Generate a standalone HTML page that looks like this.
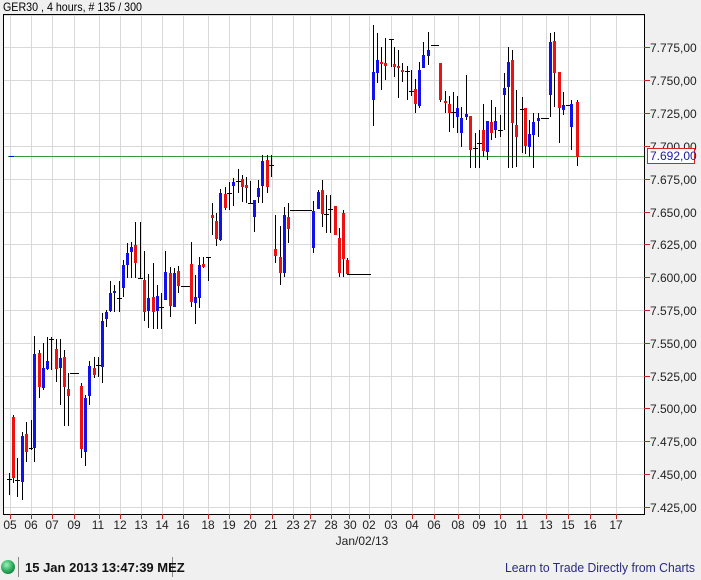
<!DOCTYPE html>
<html><head><meta charset="utf-8"><style>
body{margin:0;width:701px;height:580px;background:#f0f0f0;overflow:hidden;font-family:"Liberation Sans",Arial,sans-serif}
svg{display:block}
text{font-family:"Liberation Sans",Arial,sans-serif}
</style></head><body>
<svg width="701" height="580" viewBox="0 0 701 580" xmlns="http://www.w3.org/2000/svg">
<rect width="701" height="580" fill="#f0f0f0"/>
<text x="3" y="11" font-size="12" fill="#000" textLength="139" lengthAdjust="spacingAndGlyphs">GER30 , 4 hours, # 135 / 300</text>
<rect x="3.5" y="14.5" width="641" height="500" fill="#fff" stroke="#000"/>
<g stroke="#d9d9d9" stroke-width="1">
<path d="M4 15.5H644M4 47.5H644M4 80.5H644M4 113.5H644M4 146.5H644M4 179.5H644M4 212.5H644M4 244.5H644M4 277.5H644M4 310.5H644M4 343.5H644M4 376.5H644M4 408.5H644M4 441.5H644M4 474.5H644M4 507.5H644"/>
<path d="M10.5 15V514M31.5 15V514M52.5 15V514M74.5 15V514M99.5 15V514M120.5 15V514M141.5 15V514M162.5 15V514M183.5 15V514M208.5 15V514M229.5 15V514M250.5 15V514M272.5 15V514M293.5 15V514M310.5 15V514M331.5 15V514M349.5 15V514M369.5 15V514M391.5 15V514M412.5 15V514M434.5 15V514M458.5 15V514M479.5 15V514M500.5 15V514M522.5 15V514M546.5 15V514M568.5 15V514M590.5 15V514M616.5 15V514"/>
</g>
<path d="M8 156.5H644" stroke="#3a9a3a"/>
<path d="M9 156.5H14" stroke="#0000ff"/>
<path stroke="#000" stroke-width="1" fill="none" d="
M9.5 473V495M13.5 415V483M17.5 458V497M22.5 432V500M26.5 422V462M31.5 420V450M34.5 336V462M39.5 350V398M43.5 343V390M47.5 337V370M51.5 337V370M56.5 339V382M60.5 339V405M64.5 350V426M68.5 373V426M81.5 383V458M85.5 395V466M89.5 361V405M94.5 357V378M98.5 357V377M102.5 313V383M106.5 310V327M110.5 281V312M114.5 285V312M119.5 281V312M123.5 260V297M127.5 243V278M131.5 242V278M135.5 222V278M140.5 222V278M144.5 251V321M148.5 274V328M153.5 263V329M157.5 285V329M161.5 293V329M165.5 251V300M170.5 267V317M174.5 268V307M178.5 266V293M191.5 242V307M195.5 275V324M199.5 257V308M203.5 257V268M208.5 257V281M212.5 203V235M216.5 213V246M220.5 189V241M225.5 187V210M229.5 182V210M233.5 178V206M238.5 169V193M242.5 175V202M246.5 177V203M250.5 181V203M254.5 200V232M258.5 180V203M262.5 155V203M267.5 155V193M271.5 155V177M275.5 215V263M280.5 226V285M284.5 207V277M288.5 203V243M313.5 201V253M318.5 190V209M322.5 180V227M326.5 195V233M330.5 195V233M335.5 206V235M339.5 228V277M343.5 210V277M347.5 258V275
M373.5 25V126M377.5 33V83M381.5 47V90M385.5 38V80M391.5 39V67M394.5 47V77M398.5 50V98M402.5 63V82M407.5 66V100M411.5 70V96M415.5 79V113M419.5 62V108M423.5 42V68M428.5 32V65M440.5 63V102M445.5 91V113M449.5 96V132M453.5 92V128M457.5 96V133M461.5 107V147M466.5 75V120M470.5 116V168M475.5 133V168M479.5 130V168M483.5 104V157M487.5 121V160M491.5 100V140M495.5 107V138M500.5 115V137M504.5 73V130M508.5 47V168M512.5 50V168M516.5 90V167M522.5 97V153M525.5 108V154M529.5 120V157M533.5 113V168M538.5 113V137M550.5 33V117M554.5 32V107M559.5 72V143M563.5 92V115M571.5 100V150M577.5 100V166"/>
<path stroke="#000" d="M7 479.5H12M15 480.5H20M29 448.5H33M49 339.5H54M70 373.5H79M96 365.5H101M117 298.5H122M138 278.5H143M159 307.5H164M181 286.5H190M206 257.5H211M227 193.5H232M236 181.5H241M248 203.5H253M269 165.5H274M290 210.5H312M324 214.5H329M328 209.5H333M348 274.5H371M389 39.5H394M405 71.5H410M409 91.5H414M431 45.5H439M451 112.5H456M473 148.5H478M477 143.5H482M498 130.5H503M520 109.5H525M541 118.5H549M566 105.5H570"/>
<path fill="#ee1111" d="M12 417h3v61h-3zM25 434h3v18h-3zM38 353h3v34h-3zM55 349h3v20h-3zM63 357h3v30h-3zM67 389h3v7h-3zM80 386h3v63h-3zM93 368h3v7h-3zM134 245h3v18h-3zM143 280h3v32h-3zM152 297h3v15h-3zM169 273h3v33h-3zM177 271h3v15h-3zM190 264h3v38h-3zM202 264h3v3h-3zM211 215h3v3h-3zM215 221h3v18h-3zM224 194h3v14h-3zM241 179h3v8h-3zM245 185h3v3h-3zM266 160h3v27h-3zM274 249h3v7h-3zM279 257h3v16h-3zM287 217h3v12h-3zM321 190h3v24h-3zM334 206h3v29h-3zM338 238h3v35h-3zM342 213h3v46h-3zM346 260h3v14h-3z
M380 62h3v2h-3zM384 63h3v3h-3zM393 64h3v3h-3zM397 66h3v2h-3zM401 70h3v2h-3zM414 89h3v15h-3zM439 63h3v37h-3zM444 101h3v2h-3zM448 104h3v9h-3zM469 116h3v34h-3zM482 130h3v21h-3zM490 122h3v11h-3zM511 60h3v63h-3zM515 125h3v12h-3zM524 108h3v38h-3zM553 41h3v32h-3zM558 72h3v36h-3zM576 102h3v55h-3z"/>
<path fill="#1111ee" d="M21 436h3v46h-3zM33 354h3v94h-3zM42 368h3v20h-3zM46 361h3v8h-3zM59 358h3v10h-3zM84 398h3v54h-3zM88 366h3v30h-3zM101 321h3v46h-3zM105 312h3v7h-3zM109 293h3v18h-3zM113 291h3v2h-3zM122 265h3v23h-3zM126 253h3v12h-3zM130 247h3v5h-3zM147 298h3v13h-3zM156 296h3v15h-3zM164 272h3v28h-3zM173 273h3v34h-3zM194 297h3v6h-3zM198 265h3v33h-3zM219 193h3v47h-3zM232 182h3v4h-3zM253 200h3v17h-3zM257 188h3v9h-3zM261 161h3v25h-3zM283 215h3v58h-3zM312 211h3v37h-3zM317 192h3v17h-3z
M372 72h3v28h-3zM376 60h3v13h-3zM418 70h3v36h-3zM422 55h3v13h-3zM427 50h3v6h-3zM456 108h3v9h-3zM460 118h3v15h-3zM465 114h3v3h-3zM486 121h3v31h-3zM494 121h3v9h-3zM503 88h3v7h-3zM507 62h3v25h-3zM528 134h3v13h-3zM532 122h3v13h-3zM537 118h3v3h-3zM549 42h3v53h-3zM562 105h3v5h-3zM570 104h3v23h-3z"/>
<g stroke="#cc2222"><path d="M644 47.5H650M644 80.5H650M644 113.5H650M644 146.5H650M644 179.5H650M644 212.5H650M644 244.5H650M644 277.5H650M644 310.5H650M644 343.5H650M644 376.5H650M644 408.5H650M644 441.5H650M644 474.5H650M644 507.5H650"/></g>
<g font-size="12" fill="#222">
<text x="650" y="52">7.775,00</text><text x="650" y="85">7.750,00</text><text x="650" y="118">7.725,00</text><text x="650" y="151">7.700,00</text><text x="650" y="184">7.675,00</text><text x="650" y="217">7.650,00</text><text x="650" y="249">7.625,00</text><text x="650" y="282">7.600,00</text><text x="650" y="315">7.575,00</text><text x="650" y="348">7.550,00</text><text x="650" y="381">7.525,00</text><text x="650" y="413">7.500,00</text><text x="650" y="446">7.475,00</text><text x="650" y="479">7.450,00</text><text x="650" y="512">7.425,00</text>
</g>
<rect x="647.5" y="148.5" width="47" height="15" fill="#fff" stroke="#dd2222"/>
<text x="650" y="160" font-size="12" fill="#1a1aa0">7.692,00</text>
<path stroke="#cc2222" d="M10.5 514V519M31.5 514V519M52.5 514V519M74.5 514V519M99.5 514V519M120.5 514V519M141.5 514V519M162.5 514V519M183.5 514V519M208.5 514V519M229.5 514V519M250.5 514V519M272.5 514V519M293.5 514V519M310.5 514V519M331.5 514V519M349.5 514V519M369.5 514V519M391.5 514V519M412.5 514V519M434.5 514V519M458.5 514V519M479.5 514V519M500.5 514V519M522.5 514V519M546.5 514V519M568.5 514V519M590.5 514V519M616.5 514V519"/>
<g font-size="12" fill="#222" text-anchor="middle">
<text x="10" y="529">05</text><text x="31" y="529">06</text><text x="52" y="529">07</text><text x="74" y="529">09</text><text x="98" y="529">11</text><text x="120" y="529">12</text><text x="141" y="529">13</text><text x="162" y="529">14</text><text x="183" y="529">16</text><text x="208" y="529">18</text><text x="229" y="529">19</text><text x="250" y="529">20</text><text x="271" y="529">21</text><text x="293" y="529">23</text><text x="310" y="529">27</text><text x="331" y="529">28</text><text x="350" y="529">30</text><text x="369" y="529">02</text><text x="391" y="529">03</text><text x="412" y="529">04</text><text x="434" y="529">06</text><text x="458" y="529">08</text><text x="479" y="529">09</text><text x="500" y="529">10</text><text x="522" y="529">11</text><text x="546" y="529">13</text><text x="568" y="529">15</text><text x="590" y="529">16</text><text x="616" y="529">17</text>
<text x="362" y="545">Jan/02/13</text>
</g>
<defs><radialGradient id="g" cx="0.4" cy="0.35" r="0.7"><stop offset="0" stop-color="#9ef0b8"/><stop offset="0.6" stop-color="#2fb060"/><stop offset="1" stop-color="#1a7a40"/></radialGradient></defs>
<circle cx="8" cy="567" r="7" fill="url(#g)"/>
<path d="M18.5 557V577M172.5 557V577" stroke="#888"/>
<text x="25" y="572" font-size="13" font-weight="bold" fill="#111">15 Jan 2013 13:47:39 MEZ</text>
<text x="505" y="572" font-size="13" fill="#2a2a80" textLength="190" lengthAdjust="spacingAndGlyphs">Learn to Trade Directly from Charts</text>
</svg>
</body></html>
